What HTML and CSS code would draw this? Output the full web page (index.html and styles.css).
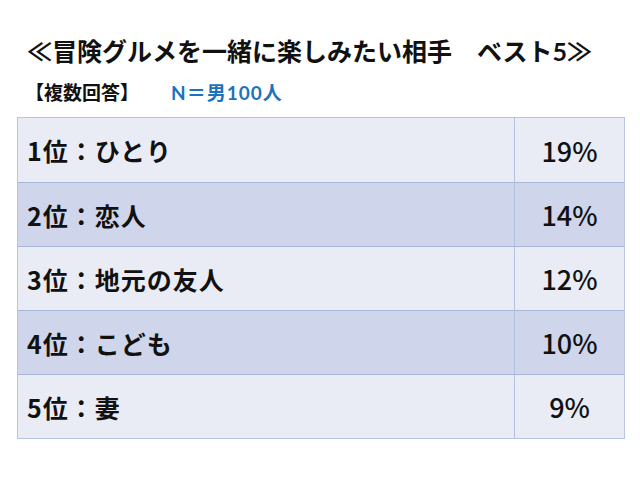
FILE: index.html
```html
<!DOCTYPE html>
<html lang="ja">
<head>
<meta charset="utf-8">
<link rel="stylesheet" href="styles.css">
</head>
<body>
<div class="page">
  <h1 class="title">≪冒険グルメを一緒に楽しみたい相手　ベスト5≫</h1>
  <div class="sub"><span class="multi">【複数回答】</span><span class="n">N＝男100人</span></div>
  <div class="table">
    <div class="row odd"><div class="label">1位：ひとり</div><div class="pct">19%</div></div>
    <div class="row even"><div class="label">2位：恋人</div><div class="pct">14%</div></div>
    <div class="row odd"><div class="label">3位：地元の友人</div><div class="pct">12%</div></div>
    <div class="row even"><div class="label">4位：こども</div><div class="pct">10%</div></div>
    <div class="row odd"><div class="label">5位：妻</div><div class="pct">9%</div></div>
  </div>
</div>
</body>
</html>
```
FILE: styles.css
```css
html, body {
  margin: 0;
  padding: 0;
  background: #ffffff;
}
body {
  font-family: Lato, "Noto Sans CJK JP", sans-serif;
  color: #111111;
  width: 640px;
  height: 480px;
  overflow: hidden;
}
.page {
  padding: 36px 17px 0 17px;
}
.title {
  margin: 0 0 0 10px;
  font-size: 25px;
  line-height: 30px;
  font-weight: 700;
  white-space: nowrap;
}
.sub {
  margin: 15px 0 0 8px;
  display: flex;
  font-size: 19px;
  line-height: 24px;
  font-weight: 700;
}
.multi {
  width: 146px;
}
.n {
  color: #1b72bd;
  letter-spacing: 1px;
}
.table {
  margin-top: 12px;
  width: 606px;
  border: 1px solid #b7c4e2;
  display: flex;
  flex-direction: column;
}
.row {
  box-sizing: border-box;
  display: grid;
  grid-template-columns: 497px 1fr;
  height: 64px;
  border-top: 1px solid #a9b8da;
}
.row:first-child {
  border-top: none;
}
.odd { background: #e9ebf5; }
.even { background: #cfd5ea; }
.label, .pct {
  display: flex;
  align-items: center;
  font-family: "Noto Sans CJK JP", sans-serif;
  font-size: 25px;
  font-weight: 700;
}
.label {
  padding-left: 9px;
  letter-spacing: 1px;
  border-right: 1px solid #b4c2e0;
}
.pct {
  justify-content: center;
  font-size: 27px;
  font-weight: 500;
}
```
